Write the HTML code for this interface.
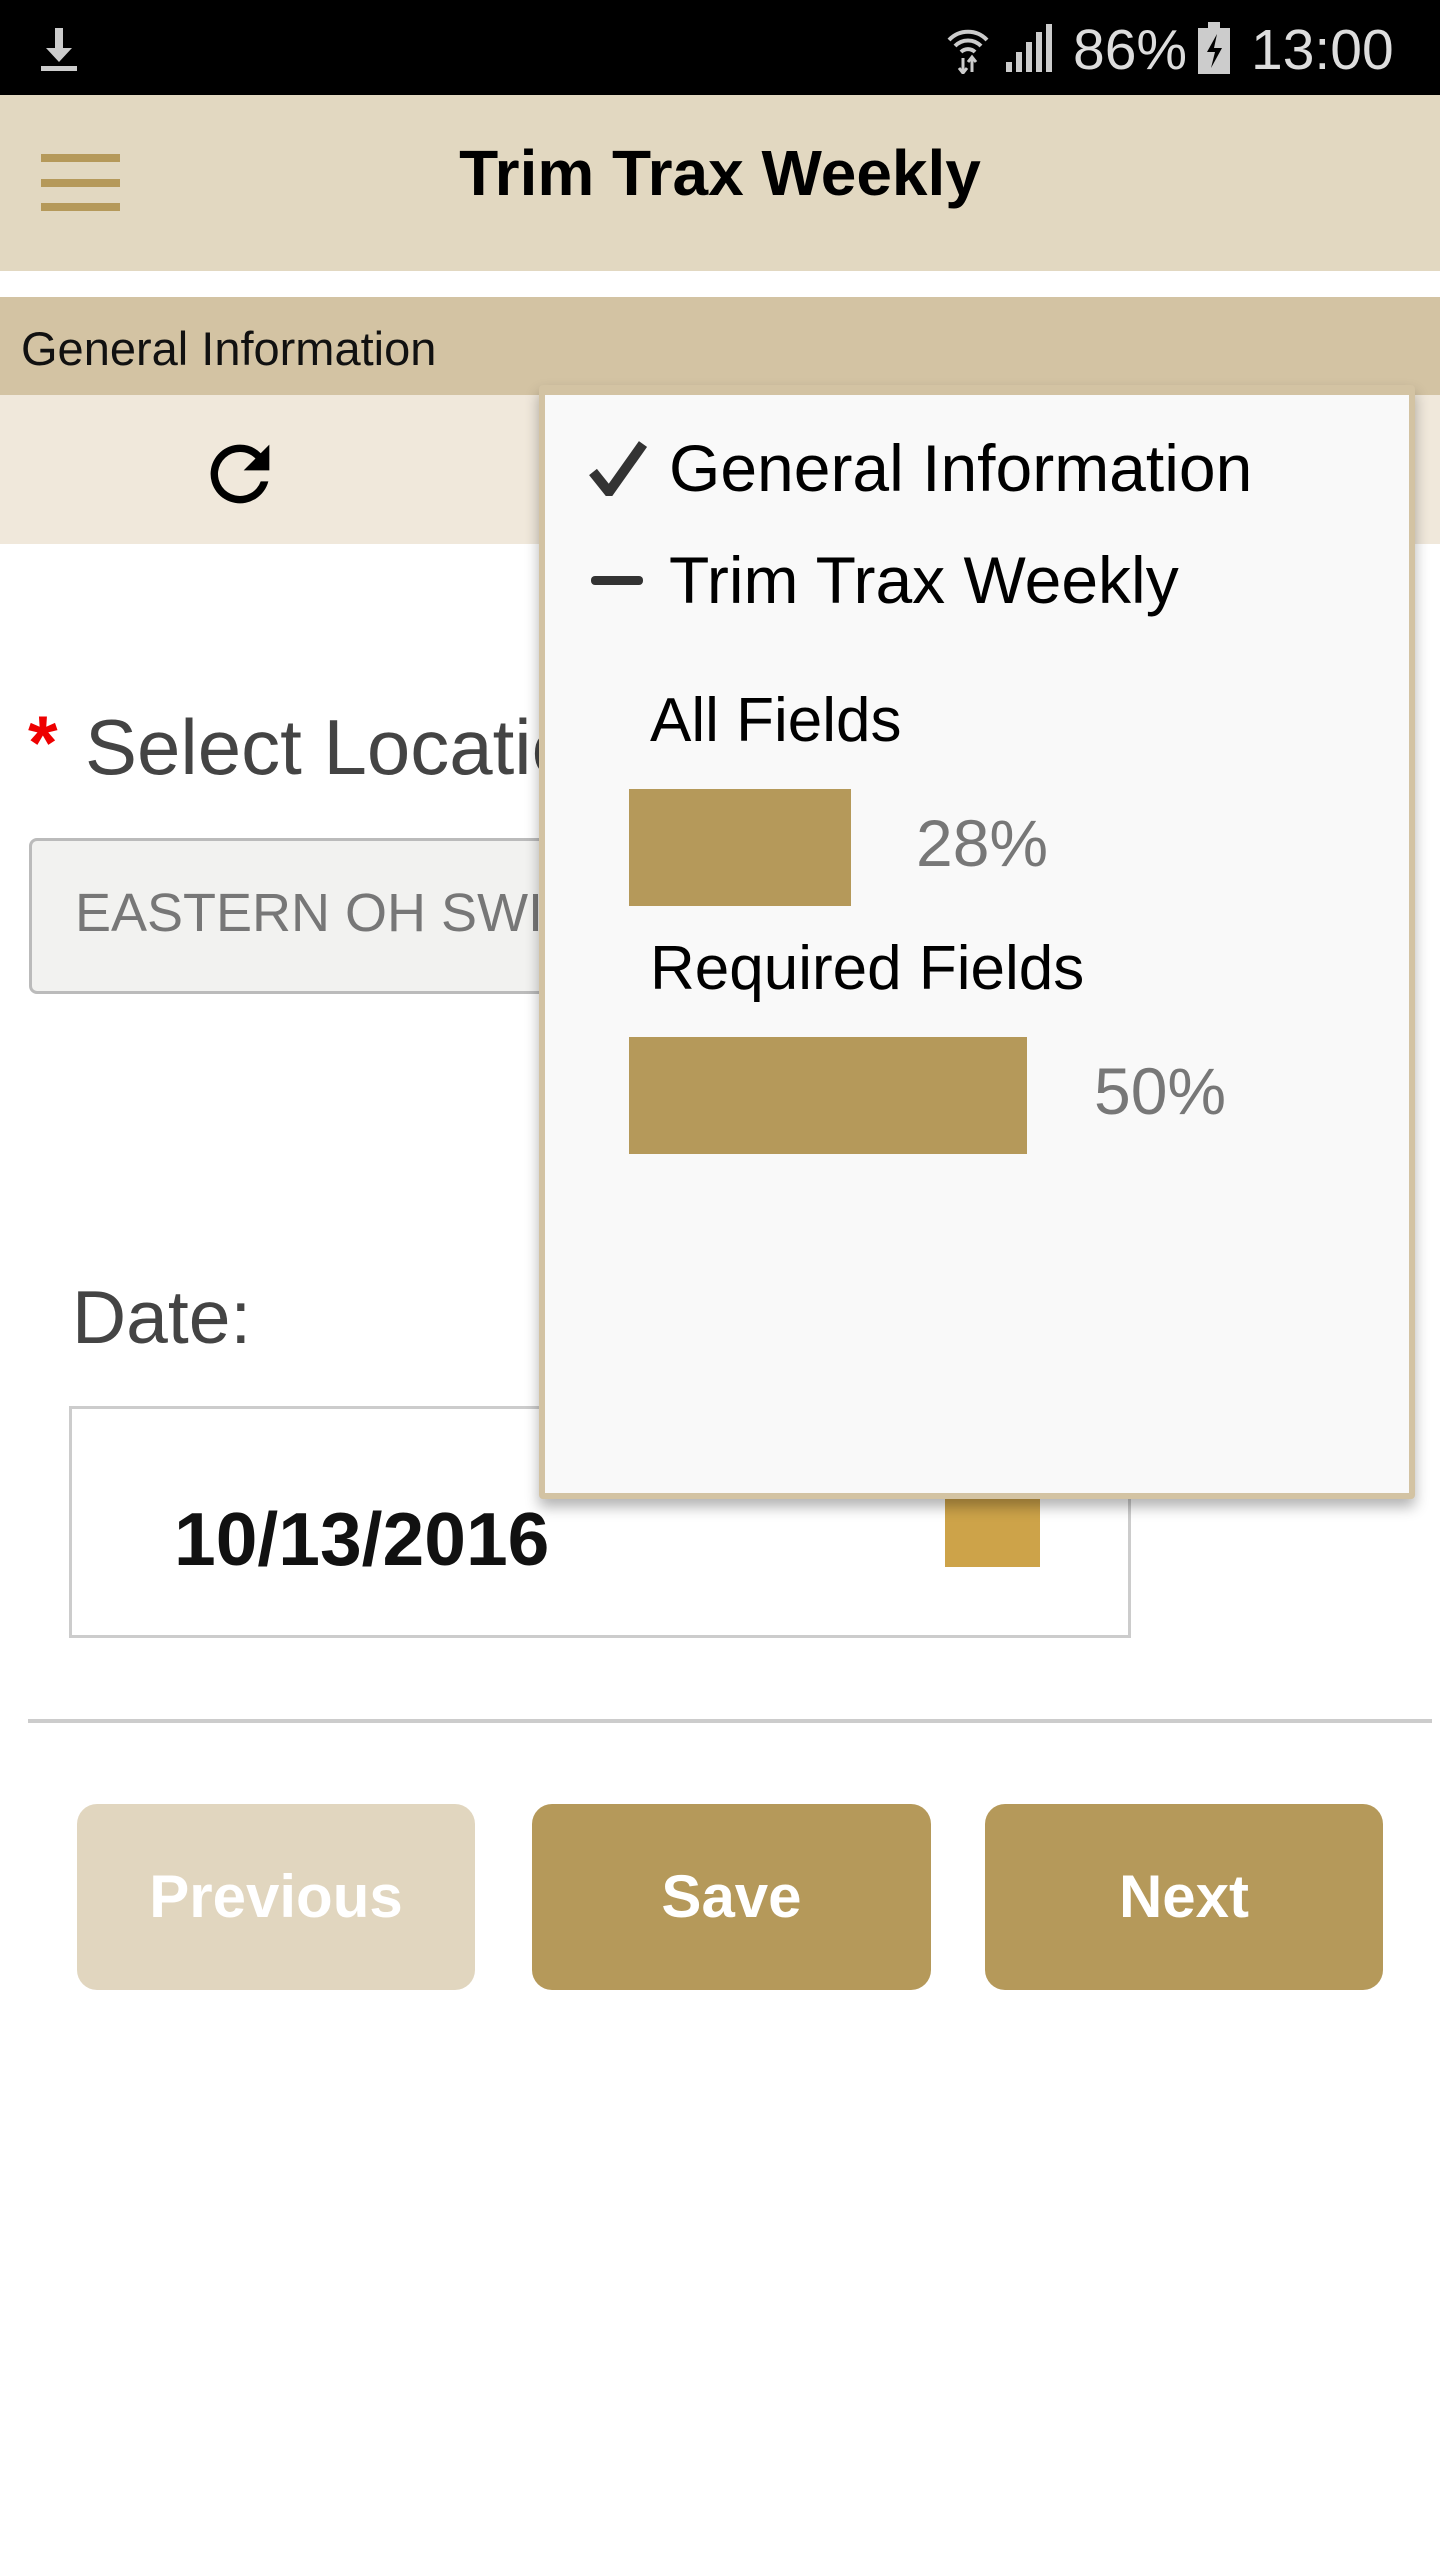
<!DOCTYPE html>
<html><head><meta charset="utf-8"><style>
*{margin:0;padding:0;box-sizing:border-box}
body{width:1440px;height:2560px;background:#fff;position:relative;overflow:hidden;font-family:"Liberation Sans",Arial,sans-serif}
.a{position:absolute}
.t{position:absolute;white-space:nowrap;line-height:1}
</style></head><body>
<div class="a" style="left:0;top:0;width:1440px;height:95px;background:#000"></div>
<svg class="a" style="left:38px;top:26px" width="42" height="46" viewBox="0 0 42 46"><path d="M17 2h8v20h9L21 36 8 22h9z" fill="#ccc"/><rect x="3" y="40" width="36" height="5" fill="#ccc"/></svg>
<svg class="a" style="left:945px;top:24px" width="46" height="50" viewBox="0 0 46 50"><path d="M4 16a26 26 0 0 1 38 0M10 22a18 18 0 0 1 26 0M16 28a10 10 0 0 1 14 0" stroke="#ccc" stroke-width="4" fill="none"/><path d="M18 34v14M14 44l4 5 4-5M27 48v-14M23 38l4-5 4 5" stroke="#ccc" stroke-width="3" fill="none"/></svg>
<svg class="a" style="left:1004px;top:24px" width="50" height="48" viewBox="0 0 50 48"><rect x="2" y="38" width="6" height="10" fill="#ccc"/><rect x="12" y="28" width="6" height="20" fill="#ccc"/><rect x="22" y="18" width="6" height="30" fill="#ccc"/><rect x="32" y="8" width="6" height="40" fill="#ccc"/><rect x="42" y="0" width="6" height="48" fill="#ccc"/></svg>
<div class="t" style="left:1073px;top:22px;font-size:57px;color:#ddd">86%</div>
<svg class="a" style="left:1198px;top:22px" width="32" height="52" viewBox="0 0 32 52"><rect x="10" y="0" width="12" height="6" fill="#ccc"/><rect x="0" y="6" width="32" height="46" fill="#ccc"/><path d="M19 12l-10 18h8l-4 16 11-20h-8z" fill="#000"/></svg>
<div class="t" style="left:1251px;top:22px;font-size:57px;color:#ddd">13:00</div>

<div class="a" style="left:0;top:95px;width:1440px;height:176px;background:#e2d8c1"></div>
<div class="a" style="left:41px;top:154px;width:79px;height:8px;background:#b5995a"></div>
<div class="a" style="left:41px;top:179px;width:79px;height:8px;background:#b5995a"></div>
<div class="a" style="left:41px;top:203px;width:79px;height:8px;background:#b5995a"></div>
<div class="t" style="left:0;width:1440px;text-align:center;top:141px;font-size:64px;font-weight:bold;color:#000">Trim Trax Weekly</div>

<div class="a" style="left:0;top:297px;width:1440px;height:98px;background:#d3c3a3"></div>
<div class="t" style="left:21px;top:325px;font-size:47px;color:#111">General Information</div>
<div class="a" style="left:0;top:395px;width:1440px;height:149px;background:#f0e8db"></div>
<svg class="a" style="left:196px;top:430px" width="88" height="88" viewBox="0 0 24 24"><path d="M17.65 6.35A7.96 7.96 0 0 0 12 4a8 8 0 1 0 7.73 10h-2.08A6 6 0 1 1 12 6c1.66 0 3.14.69 4.22 1.78L13 11h7V4z" fill="#000"/></svg>

<div class="t" style="left:28px;top:706px;font-size:76px;font-weight:bold;color:#e00">*</div>
<div class="t" style="left:85px;top:708px;font-size:78px;color:#444">Select Location</div>
<div class="a" style="left:29px;top:838px;width:700px;height:156px;border:3px solid #bbb;border-radius:8px;background:#f2f2f0"></div>
<div class="t" style="left:75px;top:886px;font-size:54px;color:#777">EASTERN OH SWIFT</div>

<div class="t" style="left:72px;top:1280px;font-size:75px;color:#444">Date:</div>
<div class="a" style="left:69px;top:1406px;width:1062px;height:232px;border:3px solid #ccc;background:#fff"></div>
<div class="t" style="left:174px;top:1502px;font-size:75px;font-weight:bold;color:#111">10/13/2016</div>
<div class="a" style="left:945px;top:1480px;width:95px;height:87px;background:#cda349"></div>

<div class="a" style="left:28px;top:1719px;width:1404px;height:4px;background:#ccc"></div>
<div class="a" style="left:77px;top:1804px;width:398px;height:186px;border-radius:20px;background:#e1d6bf"></div>
<div class="a" style="left:532px;top:1804px;width:399px;height:186px;border-radius:20px;background:#b5995a"></div>
<div class="a" style="left:985px;top:1804px;width:398px;height:186px;border-radius:20px;background:#b5995a"></div>
<div class="t" style="left:77px;width:398px;text-align:center;top:1867px;font-size:60px;font-weight:bold;color:#fff">Previous</div>
<div class="t" style="left:532px;width:399px;text-align:center;top:1867px;font-size:60px;font-weight:bold;color:#fff">Save</div>
<div class="t" style="left:985px;width:398px;text-align:center;top:1867px;font-size:60px;font-weight:bold;color:#fff">Next</div>

<div class="a" style="left:539px;top:385px;width:876px;height:1114px;background:#f9f9f9;border:6px solid #d3c3a3;border-top-width:10px;border-radius:4px;box-shadow:0 8px 14px rgba(0,0,0,0.3)"></div>
<svg class="a" style="left:589px;top:440px" width="58" height="56" viewBox="0 0 58 56"><path d="M4 32l16 20L54 4" stroke="#333" stroke-width="10" fill="none" stroke-linejoin="miter"/></svg>
<div class="t" style="left:669px;top:435px;font-size:66px;color:#000">General Information</div>
<div class="a" style="left:591px;top:576px;width:52px;height:9px;border-radius:4px;background:#333"></div>
<div class="t" style="left:669px;top:547px;font-size:66px;color:#000">Trim Trax Weekly</div>
<div class="t" style="left:650px;top:690px;font-size:62px;color:#000">All Fields</div>
<div class="a" style="left:629px;top:789px;width:222px;height:117px;background:#b5995a"></div>
<div class="t" style="left:916px;top:810px;font-size:66px;color:#777">28%</div>
<div class="t" style="left:650px;top:938px;font-size:62px;color:#000">Required Fields</div>
<div class="a" style="left:629px;top:1037px;width:398px;height:117px;background:#b5995a"></div>
<div class="t" style="left:1094px;top:1058px;font-size:66px;color:#777">50%</div>
</body></html>
